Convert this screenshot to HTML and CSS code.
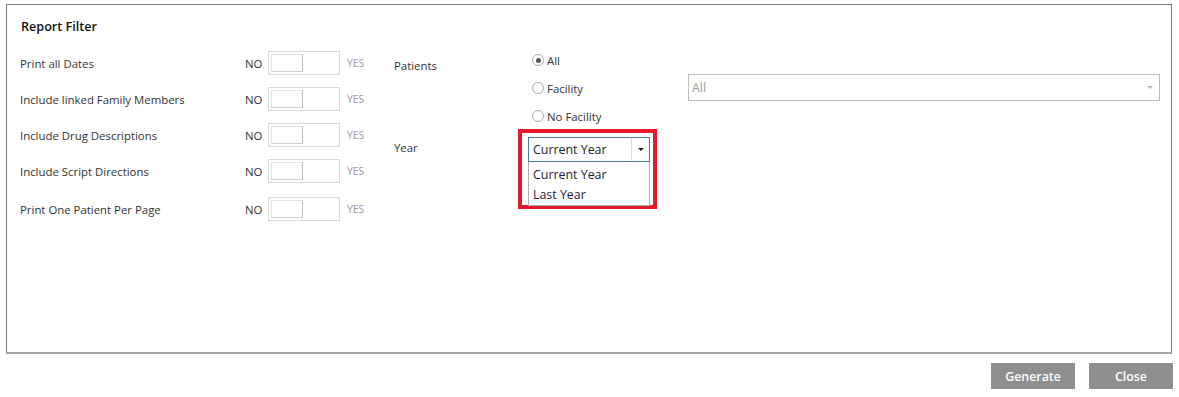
FILE: index.html
```html
<!DOCTYPE html>
<html lang="en">
<head>
    <meta charset="UTF-8">
    <title>Report Filter</title>
    <link rel="stylesheet" href="styles.css">
</head>
<body>
    <div id="report-panel">
        <div class="panel-title">Report Filter</div>

        <div class="panel-body">
            <!-- yes/no switches -->
            <div class="switch-list">
                <div class="switch-row">
                    <span class="switch-label">Print all Dates</span>
                    <span class="no">NO</span>
                    <span class="switch"><span class="knob"></span></span>
                    <span class="yes">YES</span>
                </div>
                <div class="switch-row">
                    <span class="switch-label">Include linked Family Members</span>
                    <span class="no">NO</span>
                    <span class="switch"><span class="knob"></span></span>
                    <span class="yes">YES</span>
                </div>
                <div class="switch-row">
                    <span class="switch-label">Include Drug Descriptions</span>
                    <span class="no">NO</span>
                    <span class="switch"><span class="knob"></span></span>
                    <span class="yes">YES</span>
                </div>
                <div class="switch-row">
                    <span class="switch-label">Include Script Directions</span>
                    <span class="no">NO</span>
                    <span class="switch"><span class="knob"></span></span>
                    <span class="yes">YES</span>
                </div>
                <div class="switch-row last">
                    <span class="switch-label">Print One Patient Per Page</span>
                    <span class="no">NO</span>
                    <span class="switch"><span class="knob"></span></span>
                    <span class="yes">YES</span>
                </div>
            </div>

            <!-- patients / year -->
            <div class="filter-grid">
                <div class="field-label patients-label">Patients</div>
                <div class="radio-list">
                    <label class="radio-row"><span class="radio checked"></span>All</label>
                    <label class="radio-row"><span class="radio"></span>Facility</label>
                    <label class="radio-row"><span class="radio"></span>No Facility</label>
                </div>
                <div class="facility-cell">
                    <div class="facility-select">
                        <span>All</span>
                        <span class="tiny-arrow"></span>
                    </div>
                </div>

                <div class="field-label year-label">Year</div>
                <div class="year-cell">
                    <div class="highlight">
                        <div class="year-select">
                            <span class="year-value">Current Year</span>
                            <span class="year-btn"><span class="arrow"></span></span>
                        </div>
                        <div class="year-options">
                            <div class="option">Current Year</div>
                            <div class="option">Last Year</div>
                        </div>
                    </div>
                </div>
            </div>
        </div>
    </div>

    <div class="actions">
        <button class="btn">Generate</button>
        <button class="btn">Close</button>
    </div>
</body>
</html>
```

FILE: styles.css
```css
body {
    margin: 0;
    font-family: "Open Sans", Lato, sans-serif;
    font-size: 11.4px;
    color: #333;
    background: #ffffff;
}
#report-panel {
    margin: 4px 7px 0 6px;
    height: 350px;
    border: 1px solid #7a7a7a;
    border-bottom: 2px solid #a8a8a8;
    box-sizing: border-box;
}
.panel-title {
    padding: 13px 0 0 14px;
    height: 27px;
    line-height: 18px;
    font-size: 12.6px;
    font-weight: 600;
    color: #111;
}
.panel-body {
    display: flex;
}
.switch-list {
    width: 387px;
    padding-left: 13px;
    box-sizing: border-box;
}
.switch-row {
    display: flex;
    align-items: center;
    height: 36px;
}
.switch-row.last {
    margin-top: 2px;
}
.switch-label {
    width: 225px;
}
.no {
    width: 23px;
    color: #333;
}
.switch {
    display: flex;
    width: 72px;
    height: 24px;
    padding: 2px;
    border: 1px solid #dadada;
    box-sizing: border-box;
}
.knob {
    width: 32px;
    height: 100%;
    border: 1px solid #e2e2e2;
    border-right-color: #bdbdbd;
    border-bottom-color: #cfcfcf;
    box-sizing: border-box;
}
.yes {
    margin-left: 7px;
    font-size: 10.4px;
    color: #9a9a9a;
}
.filter-grid {
    display: grid;
    grid-template-columns: 134px 160px 472px;
    grid-template-rows: 84px auto;
    padding-top: 1px;
}
.field-label {
    color: #333;
}
.patients-label {
    padding-top: 12px;
}
.radio-list {
    display: flex;
    flex-direction: column;
}
.radio-row {
    display: flex;
    align-items: center;
    height: 28px;
    padding-left: 4px;
    color: #333;
}
.radio {
    width: 12px;
    height: 12px;
    margin-right: 3px;
    border: 1px solid #a9a9a9;
    border-radius: 50%;
    box-sizing: border-box;
    display: flex;
    align-items: center;
    justify-content: center;
}
.radio.checked::after {
    content: "";
    width: 5px;
    height: 5px;
    border-radius: 50%;
    background: #555;
}
.facility-cell {
    padding-top: 28px;
}
.facility-select {
    display: flex;
    align-items: center;
    justify-content: space-between;
    height: 27px;
    padding: 0 6px 0 3px;
    border: 1px solid #bdbdbd;
    box-sizing: border-box;
    font-size: 12.4px;
    color: #9a9a9a;
}
.tiny-arrow {
    border-left: 3px solid transparent;
    border-right: 3px solid transparent;
    border-top: 3px solid #b5b5b5;
}
.year-label {
    padding-top: 10px;
}
.year-cell {
    grid-column: 2 / 4;
}
.highlight {
    width: 139px;
    height: 80px;
    margin: -1px 0 0 -10px;
    padding: 4px 3px 0 6px;
    border: 4px solid #e31b2c;
    box-sizing: border-box;
}
.year-select {
    display: flex;
    height: 25px;
    border: 1px solid #4a78ad;
    box-sizing: border-box;
    font-size: 12.4px;
    color: #1c1c2e;
}
.year-value {
    flex: 1;
    padding-left: 4px;
    line-height: 23px;
}
.year-btn {
    width: 17px;
    border-left: 1px solid #dcdcdc;
    display: flex;
    align-items: center;
    justify-content: center;
}
.arrow {
    border-left: 3px solid transparent;
    border-right: 3px solid transparent;
    border-top: 3px solid #222;
}
.year-options {
    height: 44px;
    padding-top: 3px;
    border: 1px solid #b0b0b0;
    border-top: none;
    box-sizing: border-box;
    font-size: 12.4px;
    color: #1c1c3a;
}
.option {
    height: 20px;
    line-height: 20px;
    padding-left: 4px;
}
.actions {
    display: flex;
    justify-content: flex-end;
    gap: 14px;
    margin: 9px 6px 0 0;
}
.btn {
    width: 84px;
    height: 26px;
    border: none;
    background: #8e8e8e;
    color: #ffffff;
    font-family: "Open Sans", Lato, sans-serif;
    font-size: 12.4px;
    font-weight: 600;
}
```
